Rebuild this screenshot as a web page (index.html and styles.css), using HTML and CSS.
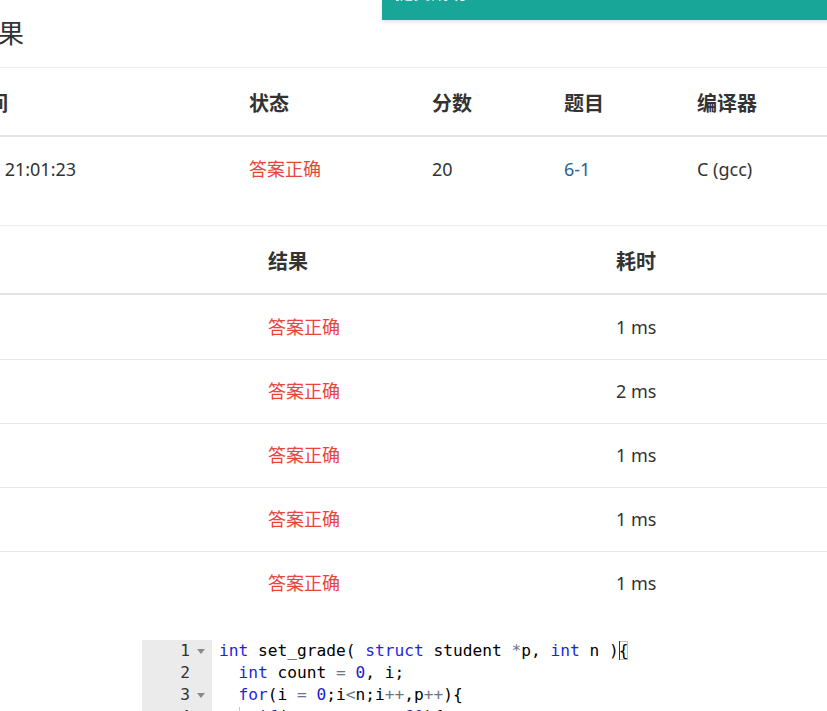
FILE: index.html
```html
<!DOCTYPE html>
<html lang="zh-CN">
<head>
<meta charset="utf-8">
<title>提交结果</title>
<link rel="stylesheet" href="styles.css">
</head>
<body>
<div class="toast"><div class="toast-text">提交成功</div></div>
<div class="page">
  <h3 class="title">提交结果</h3>
  <table class="grid t1">
    <colgroup><col class="c1"><col class="c2"><col class="c3"><col class="c4"><col class="c5"></colgroup>
    <thead>
      <tr><th>提交时间</th><th>状态</th><th>分数</th><th>题目</th><th>编译器</th></tr>
    </thead>
    <tbody>
      <tr><td><span class="time">2023-11-28 21:01:23</span></td><td class="ok">答案正确</td><td>20</td><td><a class="link" href="#">6-1</a></td><td>C (gcc)</td></tr>
    </tbody>
  </table>
  <table class="grid t2">
    <colgroup><col class="d1"><col class="d2"><col class="d3"></colgroup>
    <thead>
      <tr><th>测试点</th><th>结果</th><th>耗时</th></tr>
    </thead>
    <tbody>
      <tr><td></td><td class="ok">答案正确</td><td>1 ms</td></tr>
      <tr><td></td><td class="ok">答案正确</td><td>2 ms</td></tr>
      <tr><td></td><td class="ok">答案正确</td><td>1 ms</td></tr>
      <tr><td></td><td class="ok">答案正确</td><td>1 ms</td></tr>
      <tr><td></td><td class="ok">答案正确</td><td>1 ms</td></tr>
    </tbody>
  </table>
  <div class="editor">
    <div class="gutter">
      <div class="gl"><span>1</span><span class="fold"><svg width="8" height="5" viewBox="0 0 8 5"><polygon points="0,0 8,0 4,5" fill="#8a8a8a"/></svg></span></div>
      <div class="gl"><span>2</span><span class="fold"></span></div>
      <div class="gl"><span>3</span><span class="fold"><svg width="8" height="5" viewBox="0 0 8 5"><polygon points="0,0 8,0 4,5" fill="#8a8a8a"/></svg></span></div>
      <div class="gl"><span>4</span><span class="fold"><svg width="8" height="5" viewBox="0 0 8 5"><polygon points="0,0 8,0 4,5" fill="#8a8a8a"/></svg></span></div>
    </div>
    <div class="code">
<div class="line"><span class="kw">int</span> set_grade( <span class="kw">struct</span> student <span class="op">*</span>p, <span class="kw">int</span> n )<span class="br">{</span></div>
<div class="line">  <span class="kw">int</span> count <span class="op">=</span> <span class="num">0</span>, i;</div>
<div class="line">  <span class="kw">for</span>(i <span class="op">=</span> <span class="num">0</span>;i<span class="op">&lt;</span>n;i<span class="op">++</span>,p<span class="op">++</span>){</div>
<div class="line">  <span class="guide">  </span><span class="kw">if</span>(p<span class="op">-&gt;</span>score <span class="op">&gt;=</span> <span class="num">60</span>){</div>
    </div>
  </div>
</div>
</body>
</html>
```
FILE: styles.css
```css
html, body {
  margin: 0;
  padding: 0;
  background: #fff;
}
body {
  overflow: hidden;
  height: 711px;
  font-family: "Noto Sans", "Noto Sans CJK SC", sans-serif;
  color: #333;
}
.toast {
  position: fixed;
  top: 0;
  left: 382px;
  width: 470px;
  height: 20px;
  background: #18a698;
  box-shadow: 0 2px 4px rgba(0, 0, 0, 0.12);
  overflow: hidden;
  z-index: 5;
}
.toast-text {
  margin-top: -20px;
  padding-left: 13px;
  font-size: 18px;
  line-height: 24px;
  font-weight: 700;
  color: #fff;
}
.page {
  margin-left: -80px;
  width: 1000px;
}
.title {
  margin: 0;
  padding: 19px 0 20px 0;
  font-size: 26px;
  line-height: 28px;
  font-weight: 400;
  color: #333;
}
.grid {
  border-collapse: separate;
  border-spacing: 0;
  table-layout: fixed;
  width: 1000px;
  margin-bottom: 24px;
}
.t2 {
  margin-bottom: 25px;
}
.c1 { width: 321px; }
.c2 { width: 183px; }
.c3 { width: 132px; }
.c4 { width: 133px; }
.d1 { width: 340px; }
.d2 { width: 348px; }
.grid th {
  text-align: left;
  font-size: 20px;
  font-weight: 700;
  line-height: 27px;
  padding: 22px 8px 18px;
  border-top: 1px solid #ececec;
  border-bottom: 2px solid #e4e4e4;
  color: #333;
  white-space: nowrap;
}
.grid td {
  font-size: 18px;
  line-height: 24px;
  padding: 19px 8px 20px;
  border-top: 1px solid #e8e8e8;
  white-space: nowrap;
}
.grid tbody tr:first-child td {
  border-top-color: transparent;
}
.time {
  display: inline-block;
  margin-left: -22px;
}
.ok {
  color: #e8453c;
}
.link {
  color: #2a5f94;
  text-decoration: none;
}
.editor {
  margin-left: 222px;
  display: flex;
  font-family: "DejaVu Sans Mono", monospace;
  font-size: 16.2px;
  line-height: 22px;
}
.gutter {
  width: 70px;
  background: #ebebeb;
  color: #333;
}
.gl {
  display: flex;
  justify-content: flex-end;
  align-items: center;
  height: 22px;
}
.fold {
  width: 22px;
  display: flex;
  justify-content: center;
  align-items: center;
}
.code {
  padding-left: 7px;
  color: #000;
}
.line {
  white-space: pre;
  height: 22px;
}
.kw { color: #1f1fe6; }
.num { color: #2020c8; }
.op { color: #687687; }
.br {
  box-shadow: inset 1px 0 0 #333, inset 0 0 0 1px #c0c0c0;
}
.guide {
  box-shadow: inset 1px 0 0 #c8c8c8;
}
```
